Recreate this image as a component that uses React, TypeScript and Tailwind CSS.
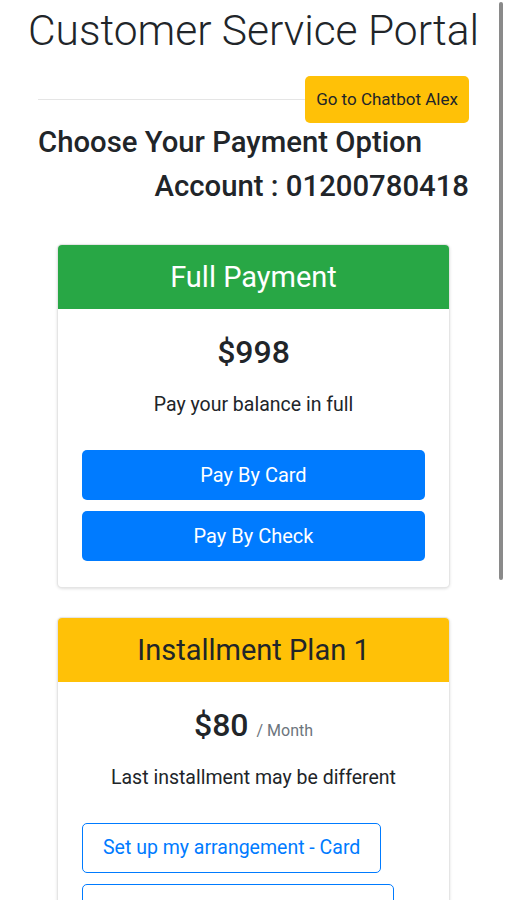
import React from 'react';

interface PlanProps {
  title: string;
  headerClass: string;
  price: string;
  per?: string;
  note: string;
  children: React.ReactNode;
}

const PlanCard: React.FC<PlanProps> = ({ title, headerClass, price, per, note, children }) => (
  <div className="mx-[19px] rounded-[5px] border border-black/10 bg-white shadow-[0_1px_3px_rgba(0,0,0,0.12)] overflow-hidden">
    {/* Header */}
    <div className={`h-[64px] flex items-center justify-center text-[29px] leading-[34px] ${headerClass}`}>
      {title}
    </div>
    {/* Body */}
    <div className="px-[24px] pt-[24px] pb-[26px] flex flex-col">
      <div className="text-center text-[32px] leading-[38px] font-medium text-[#212529]">
        {price}
        {per && <span className="ml-[8px] text-[16px] leading-none font-normal text-[#6c757d]">{per}</span>}
      </div>
      <p className="mt-[20px] text-center text-[19.5px] leading-[28px] text-[#212529]">{note}</p>
      <div className="mt-[31px] flex flex-col items-start gap-[11px]">{children}</div>
    </div>
  </div>
);

export default function App() {
  return (
    <div className="relative h-[900px] overflow-hidden bg-white font-['Roboto',sans-serif] text-[#212529]">
      <div className="px-[38px] pt-[6px] pb-[40px]">
        <h1 className="text-center text-[42.5px] leading-[50px] font-light whitespace-nowrap -mx-[20px]">
          Customer Service Portal
        </h1>

        {/* Divider + chatbot link */}
        <div className="mt-[20px] flex items-center">
          <div className="flex-1 h-px bg-black/10" />
          <button className="h-[47px] w-[164px] rounded-[5px] bg-[#ffc107] text-[17px] text-[#212529]">
            Go to Chatbot Alex
          </button>
        </div>

        <h3 className="mt-[2px] text-[29.3px] leading-[35px] font-medium whitespace-nowrap">Choose Your Payment Option</h3>
        <h3 className="mt-[9px] text-right text-[29.3px] leading-[35px] font-medium">Account : 01200780418</h3>

        <div className="mt-[40px] flex flex-col gap-[29px]">
          <PlanCard
            title="Full Payment"
            headerClass="bg-[#28a745] text-white"
            price="$998"
            note="Pay your balance in full"
          >
            <button className="w-full h-[50px] rounded-[5px] bg-[#007bff] text-white text-[20px]">Pay By Card</button>
            <button className="w-full h-[50px] rounded-[5px] bg-[#007bff] text-white text-[20px]">Pay By Check</button>
          </PlanCard>

          <PlanCard
            title="Installment Plan 1"
            headerClass="bg-[#ffc107] text-[#212529]"
            price="$80"
            per="/ Month"
            note="Last installment may be different"
          >
            <button className="h-[50px] px-[20px] rounded-[5px] border border-[#007bff] text-[#007bff] text-[19.5px]">
              Set up my arrangement - Card
            </button>
            <button className="h-[50px] px-[20px] rounded-[5px] border border-[#007bff] text-[#007bff] text-[19.5px]">
              Set up my arrangement - Check
            </button>
          </PlanCard>
        </div>
      </div>

      {/* scrollbar thumb */}
      <div className="absolute left-[499px] top-[2px] w-[4px] h-[578px] rounded-full bg-[#8a8a8a]" />
    </div>
  );
}
